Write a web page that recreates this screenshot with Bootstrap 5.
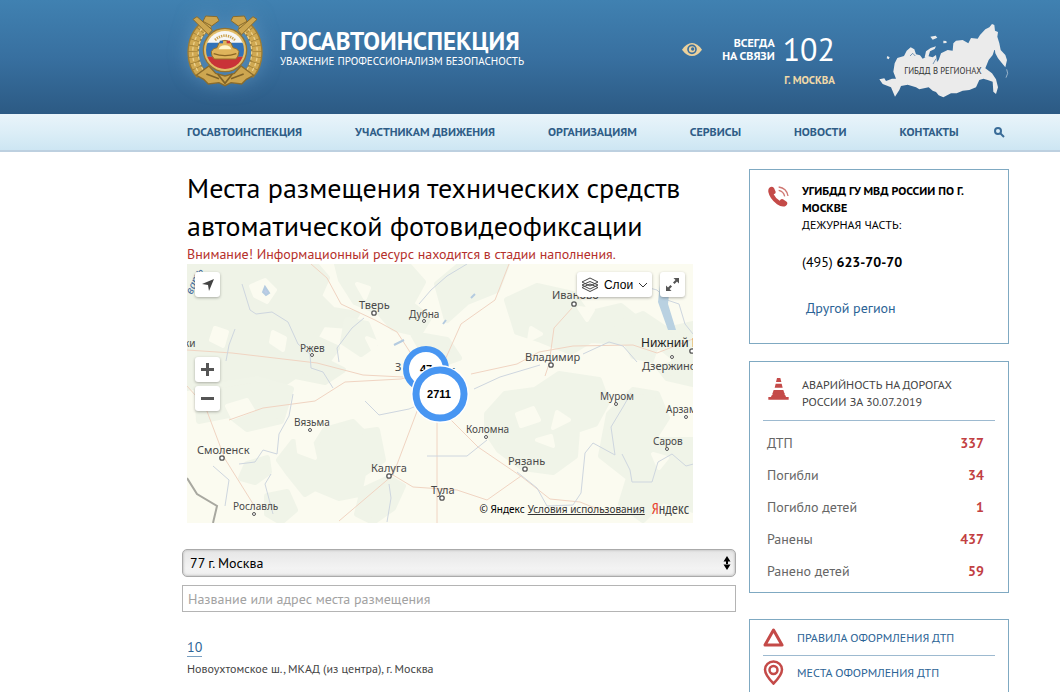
<!doctype html>
<html lang="ru">
<head>
<meta charset="utf-8">
<meta name="viewport" content="width=device-width, initial-scale=1">
<title>Госавтоинспекция</title>
<link rel="stylesheet" href="https://cdn.jsdelivr.net/npm/bootstrap@5.3.0/dist/css/bootstrap.min.css">
<style>
body{font-family:"PT Sans","Noto Sans",sans-serif;font-size:14px;line-height:18px;color:#000;background:#fff}
a{text-decoration:none;color:#2c6496}
.wrap{padding-left:187px;padding-right:51px}
.site-head{background:linear-gradient(#4081b1,#3870a0 50%,#2c5a84);min-height:114px;color:#fff}
.brand-box{padding-top:12px;gap:17px}
.brand-box svg{filter:drop-shadow(0 0 9px rgba(111,163,203,.5))}
.brand-name{font-size:25px;line-height:28px;font-weight:700;padding-top:15px}
.brand-sub{font-size:11px;line-height:12px}
.contact-box{padding-top:32px;margin-right:41px}
.eye-link{margin-right:20px;line-height:13px}
.always{font-size:12px;line-height:13px;font-weight:700}
.num102{font-size:32px;line-height:34px}
.city{font-size:11px;line-height:14px;font-weight:700;color:#f0d9a8}
.city:hover{color:#fff}
.regions{padding-top:20px}
.top-nav{background:linear-gradient(#e9f4fa,#dceef7 50%,#cde6f3);border-bottom:2px solid #bdd0e0;min-height:38px;font-size:12px;font-weight:700}
.top-nav ul{gap:53px}
.top-nav a{color:#2f5d87}
.icon-btn{background:none;border:0;padding:0;line-height:0}
.page-body{gap:13px;padding-top:17px}
h1{font-size:28px;line-height:38px;font-weight:400;margin:0}
.warn-text{color:#b5302c;line-height:19px}
.map-box{position:relative;max-width:506px;height:259px;overflow:hidden;background:#fbfbf0}
.map-box>svg{width:100%;height:100%;display:block}
.map-ctl{position:absolute;display:flex}
.zoom-ctl{bottom:112px}
.map-btn{background:#fff;border:0;border-radius:3px;box-shadow:0 1px 3px rgba(0,0,0,.3);width:25px;height:25px;padding:0;display:flex;align-items:center;justify-content:center}
.map-btn.layers{width:75px;gap:5px;font:12px "Liberation Sans",sans-serif;color:#000}
.map-copy{position:absolute;right:4px;bottom:5px;gap:3px;font-family:"Noto Sans",sans-serif;font-size:10px;line-height:18px}
.map-copy a{color:#333;text-decoration:underline}
.map-copy .ya-logo{font-family:"PT Sans Narrow","PT Sans","Noto Sans",sans-serif;font-size:15px;color:#444;text-decoration:none}
.ya-logo span{color:#e8402c}
.filters{margin:26px 0 0 -5px}
.filters .form-select{height:28px;padding:0 7px;border:1px solid #aaa;box-shadow:inset 0 0 2px 1px #ccc;border-radius:5px;font-size:14px;line-height:24px;color:#000;background:
url("data:image/svg+xml,%3Csvg xmlns='http://www.w3.org/2000/svg' viewBox='0 0 8 14'%3E%3Cpath d='M4 0l3.500 5.500h-7zM4 14l3.500-5.500h-7zM3 5h2v4H3z'/%3E%3C/svg%3E") right 4px center/8px 14px no-repeat,linear-gradient(#e6e6e6,#f3f3f3 70%,#eee)}
.filters .form-control{height:27px;padding:0 5px;border:1px solid #b4b4b4;border-radius:0;font-size:14px;line-height:20px}
.filters .form-control::placeholder{color:#a2a2a2}
.place{padding-top:26px}
.place a{border-bottom:1px solid #7aa0c2}
.place p{font-size:12px;color:#444;margin:4px 0 0}
aside{width:260px;flex:none;display:flex;flex-direction:column}
.side-box{border:1px solid #7fa9c2;padding:12px 13px}
.side-row{display:flex;gap:13px;padding-left:5px}
.side-row svg{flex:none}
.caps{font-size:12px;line-height:17px}
.duty{min-height:175px;margin-bottom:17px}
.duty-phone{padding:20px 0 28px}
.accidents{padding-bottom:5px;margin-bottom:26px}
.accidents .caps{color:#444;padding:2px 0 10px}
.accidents .thin-line{padding-top:6px}
.box-links a{gap:13px}
.stats{width:100%;margin:0}
.stats th,.stats td{font-size:14px;line-height:20px;padding:6px 11px 6px 4px}
.stats th{font-weight:400;color:#666}
.stats td{font-weight:700;text-align:right;color:#c23f43}
.thin-line{border-top:1px solid #9dbad0}
</style>
</head>
<body>
<header class="site-head wrap d-flex justify-content-between">
  <a href="#" class="brand-box d-flex text-white">
    <svg width="76" height="76" viewBox="0 0 228 228">
      <g fill="none" stroke="#9c7c35" stroke-width="34"><path d="M66 34C6 70 8 150 42 186M162 34C222 70 220 150 186 186"/></g>
      <g fill="none" stroke="#cfa851" stroke-width="26" stroke-dasharray="15 2"><path d="M66 34C6 70 8 150 42 186M162 34C222 70 220 150 186 186"/></g>
      <g fill="none" stroke="#ecd08a" stroke-width="4" stroke-dasharray="10 6"><path d="M58 38C8 76 8 146 36 182M170 38C220 76 220 146 192 182M68 48C26 80 26 140 50 176M160 48C202 80 202 140 178 176"/></g>
      <path d="M18 22l12-8 46 40-12 14zM210 22l-12-8-46 40 12 14zM56 12l34 2 6 12-22 16-26-14zM172 12l-34 2-6 12 22 16 26-14z" fill="#cda650" stroke="#8b6c2c" stroke-width="3"/>
      <path d="M28 190l38-28 20 22 28 8 28-8 20-22 38 28-22 12-14 14-32-4-18 9-18-9-32 4-14-14z" fill="#cda650" stroke="#8b6c2c" stroke-width="4"/>
      <path d="M58 186l38 14M170 186l-38 14M92 186l22 28 22-28" fill="none" stroke="#806328" stroke-width="5"/>
      <circle cx="114" cy="114" r="67" fill="#94732f"/><circle cx="114" cy="114" r="63" fill="#e2bd68"/>
      <clipPath id="em"><circle cx="114" cy="114" r="57"/></clipPath>
      <g clip-path="url(#em)"><path fill="#f7f7f5" d="M50 50h130v46H50z"/><path fill="#3272b8" d="M50 92h130v42H50z"/><path fill="#c93338" d="M50 134h130v40H50z"/></g>
      <path d="M84 84Q114 58 144 84" fill="none" stroke="#caa24c" stroke-width="8" stroke-dasharray="4 3"/>
      <path d="M96 93q18-16 36 0l6 14q14 2 18 12-2 15-9 22H82q-10-10-9-22 4-11 17-12z" fill="#dfb45b" stroke="#94712b" stroke-width="3"/>
      <path d="M99 104q15-8 30 0l4 8H95z" fill="#fff4ca"/><path d="M80 125q34 12 68 0" fill="none" stroke="#8a6524" stroke-width="4"/>
      <path fill="#306ab0" d="M98 86h10v8H98z"/><path fill="#cc3438" d="M119 86h10v8h-10z"/>
    </svg>
    <div><div class="brand-name">ГОСАВТОИНСПЕКЦИЯ</div><div class="brand-sub">УВАЖЕНИЕ ПРОФЕССИОНАЛИЗМ БЕЗОПАСНОСТЬ</div></div>
  </a>
  <div class="d-flex">
    <div class="contact-box">
      <div class="d-flex align-items-center">
        <a href="#" aria-label="Версия для слабовидящих" class="eye-link"><svg width="20" height="13" viewBox="0 0 60 39"><path d="M0 20Q14 0 30 0t30 20Q46 39 30 39T0 20z" fill="#ecd19c"/><circle cx="30" cy="19" r="12" fill="none" stroke="#3a6f9e" stroke-width="5"/><circle cx="32" cy="18" r="5" fill="#3a6f9e"/></svg></a>
        <div class="always text-end me-2">ВСЕГДА<br>НА СВЯЗИ</div><div class="num102">102</div>
      </div>
      <div class="text-end pt-1"><a href="#" class="city">Г. МОСКВА</a></div>
    </div>
    <a href="#" class="regions"><svg width="133" height="80" viewBox="620 60 399 240">
      <g fill="#ebebeb"><path d="M630 238L645 235 650 243 668 236 680 236 672 215 676 190 684 174 704 168 712 152 724 142 735 148 740 163 752 166 760 176 775 168 790 172 800 165 803 186 808 180 815 160 835 150 850 152 852 130 860 122 880 120 897 130 905 114 925 116 932 105 948 88 960 82 968 72 975 75 977 92 986 96 984 110 990 130 994 150 975 150 970 165 958 180 948 205 968 220 980 238 986 262 980 282 972 275 970 245 955 240 942 236 930 240 920 262 900 270 880 272 862 280 845 280 822 292 808 286 800 276 790 272 778 262 750 268 740 262 715 254 695 258 690 270 677 290 665 262 640 252Z"/>
      <path d="M976 145L994 150 1008 165 1013 180 1008 202 998 190 986 175 978 160ZM654 168l7 4-3 6-6-3zM783 110l16-3 5 6-14 6zM822 122l9 1 1 6-10 1zM766 172l4-18 14-10 16-5-4 8-14 7-6 20z"/></g>
      <path fill="none" stroke="#cad8e4" stroke-width="2" d="M1012 208l3 12-5 13"/><path fill="none" stroke="#3a6b98" stroke-width="2" d="M722 168l8-8 8 8M791 192l9-16"/>
      <text x="705" y="222" font-size="26" fill="#333">ГИБДД В РЕГИОНАХ</text></svg></a>
  </div>
</header>
<nav class="top-nav wrap d-flex align-items-center">
  <ul class="list-unstyled d-flex m-0 text-nowrap">
    <li><a href="#">ГОСАВТОИНСПЕКЦИЯ</a></li><li><a href="#">УЧАСТНИКАМ ДВИЖЕНИЯ</a></li><li><a href="#">ОРГАНИЗАЦИЯМ</a></li><li><a href="#">СЕРВИСЫ</a></li><li><a href="#">НОВОСТИ</a></li><li><a href="#">КОНТАКТЫ</a></li>
  </ul>
  <button class="icon-btn ms-auto" aria-label="Поиск"><svg class="me-1" width="11" height="11" viewBox="0 0 11 11" fill="none" stroke="#3a6c98" stroke-width="2"><circle cx="4" cy="4" r="3"/><path d="M6.500 6.500L10 10"/></svg></button>
</nav>
<div class="page-body wrap d-flex align-items-start">
  <main class="flex-grow-1">
    <h1>Места размещения технических средств автоматической фотовидеофиксации</h1>
    <div class="warn-text">Внимание! Информационный ресурс находится в стадии наполнения.</div>
    <div class="map-box">
      <svg viewBox="0 0 506 259" preserveAspectRatio="xMidYMid slice" font-family="Noto Sans, sans-serif">
        <g stroke-linejoin="round" stroke-width="6"><path fill="#eff3e7" stroke="#eff3e7" d="M0 0h128l12 14-8 18 14 14 24 4-8 12-26-2-8 14 22 10-10 14 16 8-18 12-30-6-12 8-28 2-10 12-24-4-10-10-24 4z"/>
        <path fill="#f0f4e8" stroke="#f0f4e8" d="M10 125l60-10 34 10-10 32-34 8-18-14-30 6zM92 196l14-18 22 4 10-16 28-8 10 10 14-2 6 30-20 14-4 20-20 4-24-10-10 6-16-20zM60 200l20-6 2 14-14 10-14-4zM80 232l20-4 8 18-14 12-14-8zM150 0h70l16 18-12 22 18 14-10 16-26-6-14-16-24-10-14-22zM160 56l20 4 8 20-14 10-18-12zM320 36l30-14 36 8 14 20 34-8 20 16-16 20-34-2-20 12-30-12-24-8zM300 150l18-20 30-4 24-16 40 6 8 22-12 22-18 6-2 26-22 16-30-4-24-18-12-18zM422 150l24-24 24 4 10 24-14 22 40 0v70l-30-10-20 20-22-16 8-26-28-22zM430 60l26-10 24 16 26-6v60l-26-6-14-18-20-4zM250 20l24-20h46l-10 26-30 12-20 18zM176 226l26-12 14 8-10 22-20 14-16-8zM226 70l34 6 12 18-22 8-14-14z"/></g>
        <path fill="#fbfbf0" stroke="#fbfbf0" stroke-width="4" stroke-linejoin="round" d="M64 22l14-6 10 10-8 12-12-6zM28 64l12 4-4 14-12-6zM86 68l12 6-2 12-12-8zM110 172l14 4 4 18-16-6zM344 64l10 6-12 6zM472 88l10 8-14 4zM370 148l12 8-16 8zM330 150l16-6 6 12-18 6zM40 142l20-6 6 10-20 8zM180 74l10 4-4 8zM466 190l14 4-8 10zM170 20l12 4-4 10zM392 44l14 2-6 10zM350 176l14-4 2 10z"/>
        <g fill="none" stroke="#f0d4c2" stroke-width="1" stroke-linejoin="round"><path d="M0 86l45 3 85 10 46 12 40 2M124 0l16 14 14 26 34 16 22 12 22 34M42 156l34-12 52-7 30-19 56-3 26-7M0 122l18 20 20 53 30 48M253 145l38 38 44 30 28 22 30 3 30 12M250 156v103M232 142l-26 69 20 12 44 3 30 10 34-24M206 211l-54 46M284 110l46-10 22-12 34-6 60-1 24 8 36-14M322 0l-14 36-34 24-16 36M385 44l-18 20-5 36-4 12"/></g>
        <g fill="none" stroke="#ced6df" stroke-width="1" stroke-linejoin="round"><path d="M55 20l8 26 6 4 16-2 16 10 10 22 12 10 1 14 12 4 10 16M152 98l-2-14 15-20 12-10M106 130l-4 22-10 18-2 20-14-4-8 12-16 2M48 65l-6 16-3 16M84 210l-6 10 8 30M26 202l16 14-4 26M232 40l12-14 16-14 20-12M178 137l14 14 30-6 24-10M202 220l2 14-4 24M240 192l40 0 20-16M330 208l20 16 10 18 26-1 8-12 4-40 8-10 22 12-4-28 12-20 8-14M435 190l8 16 2 12 20 0 6-20 14-8 14 12 15-4 7 10v40M506 70l-8-10-6-20-12-4-10-10-30-8-26 0-8-4"/><path d="M396 90l26-12 14 4 14 16M287 125l26-12 40-12"/></g>
        <path d="M474 12l-3 26 10 28h8l-8-26 3-28z" fill="#b9d1e1"/><path d="M76 28l2-5 4 6-3 2zM207 81l10-5M256 60l3-4M284 34l4-4" fill="#bdcce7" stroke="#b4cbe0" stroke-width="2"/>
        <path d="M0 214l10 16 20 12-4 17" fill="none" stroke="#a8a8a0" stroke-width="2"/>
        <text transform="translate(5 31)rotate(-65)" fill="#446b9f" font-size="11" font-style="italic">вать</text>
        <g fill="#494949" font-size="11">
          <text x="172" y="45">Тверь</text><text x="222" y="54" font-size="10">Дубна</text><text x="113" y="88" font-size="10">Ржев</text><text x="-3" y="83" font-size="10">ки</text><text x="208" y="107">З</text>
          <text x="365" y="35">Иваново</text><text x="338" y="97">Владимир</text><text x="454" y="83" fill="#222" font-size="12">Нижний Новгород</text><text x="455" y="106">Дзержинск</text><text x="413" y="136" font-size="10">Муром</text><text x="479" y="149" font-size="10">Арзамас</text><text x="466" y="181" font-size="10">Саров</text>
          <text x="107" y="162" font-size="10">Вязьма</text><text x="10" y="190">Смоленск</text><text x="46" y="246" font-size="10">Рославль</text><text x="184" y="208">Калуга</text><text x="279" y="169" font-size="10">Коломна</text><text x="321" y="201">Рязань</text><text x="244" y="230">Тула</text>
        </g>
        <g fill="#fff" stroke="#555"><g stroke-width="1.300"><circle cx="187" cy="49" r="2.200"/><circle cx="387" cy="40" r="2.200"/><circle cx="364" cy="101" r="2.200"/><circle cx="35" cy="194" r="2.200"/><circle cx="202" cy="212" r="2.200"/><circle cx="338" cy="205" r="2.200"/><circle cx="255" cy="234" r="2.200"/><circle cx="505" cy="87" r="2.200"/></g><circle cx="237" cy="57" r="1.500"/><circle cx="125" cy="91" r="1.500"/><circle cx="485" cy="93" r="1.500"/><circle cx="429" cy="140" r="1.500"/><circle cx="499" cy="153" r="1.500"/><circle cx="480" cy="185" r="1.500"/><circle cx="123" cy="166" r="1.500"/><circle cx="67" cy="250" r="1.500"/><circle cx="299" cy="173" r="1.500"/></g>
        <g font-family="Liberation Sans, sans-serif" font-size="11" font-weight="700" text-anchor="middle">
          <circle cx="239" cy="105" r="20" fill="#fff" stroke="#4896f2" stroke-width="6"/><text x="239" y="109">47</text><text x="266" y="107" font-weight="400">-</text>
          <circle cx="253" cy="130" r="29" fill="#fff"/><circle cx="253" cy="130" r="24" fill="#fff" stroke="#4896f2" stroke-width="7"/><text x="252" y="134">2711</text>
        </g>
      </svg>
      <div class="map-ctl top-0 start-0 m-2"><button class="map-btn" aria-label="Моё местоположение"><svg width="14" height="14" viewBox="0 0 14 14"><path fill="#444" d="M13 1L8 13 7 7 1 6z"/></svg></button></div>
      <div class="map-ctl zoom-ctl flex-column start-0 ms-2 gap-1"><button class="map-btn" aria-label="Приблизить"><svg width="13" height="13" viewBox="0 0 13 13"><path fill="#555" d="M5 0h3v5h5v3H8v5H5V8H0V5h5z"/></svg></button><button class="map-btn" aria-label="Отдалить"><svg width="13" height="3"><path fill="#555" d="M0 0h13v3H0z"/></svg></button></div>
      <div class="map-ctl top-0 end-0 m-2 gap-2"><button class="map-btn layers"><svg width="18" height="15" viewBox="0 0 18 15" fill="#fff" stroke="#444"><path d="M1 10.500l8-3.500 8 3.500-8 4zM1 8l8-3.500L17 8l-8 4zM1 5l8-4 8 4-8 4z"/></svg>Слои<svg width="10" height="6" viewBox="0 0 10 6" fill="none" stroke="#333"><path d="M1 1l4 4 4-4"/></svg></button><button class="map-btn" aria-label="На весь экран"><svg width="13" height="13" viewBox="0 0 13 13"><path fill="#555" d="M7.500 0H13v5.500l-2-2-2.500 2.500-1.500-1.500 2.500-2.500zM5.500 13H0V7.500l2 2L4.500 7 6 8.500 3.500 11z"/></svg></button></div>
      <div class="map-copy d-flex"><span>© Яндекс</span><a href="#">Условия использования</a><a href="#" class="ya-logo ms-1"><span>Я</span>ндекс</a></div>
    </div>
    <form class="filters d-flex flex-column gap-2">
      <select class="form-select" aria-label="Регион"><option>77 г. Москва</option></select>
      <input class="form-control" type="text" aria-label="Место размещения" placeholder="Название или адрес места размещения">
    </form>
    <div class="place"><a href="#">10</a><p>Новоухтомское ш., МКАД (из центра), г. Москва</p></div>
  </main>
  <aside>
    <section class="side-box duty">
      <div class="side-row"><svg class="mt-1" width="21" height="21" viewBox="0 0 63 63"><path fill="#c44a48" d="M4 5Q12-1 18 6l5 11q1 6-6 8 6 13 18 19 4-7 10-4l11 7q5 6-2 12-10 7-27-4Q5 38 1 18 0 9 4 5z"/><path d="M32 3Q56 6 60 30M32 13Q47 16 50 31" fill="none" stroke="#cf7772" stroke-width="4"/></svg>
        <div><div class="caps"><b>УГИБДД ГУ МВД РОССИИ ПО Г. МОСКВЕ</b><br>ДЕЖУРНАЯ ЧАСТЬ:</div><div class="duty-phone">(495) <b>623-70-70</b></div><a class="ms-1 d-block" href="#">Другой регион</a></div></div>
    </section>
    <section class="side-box accidents">
      <div class="side-row"><svg class="mt-1" width="21" height="22" viewBox="0 0 63 66"><path fill="#c44a48" d="M27 0h10l3 12H24zM23 17h18l3 12H20zM17 36h29l4 12H13zM11 52h41l2 5h8v8H1v-8h8z"/><path d="M15 46h34l3 10H11z" fill="#c44a48"/></svg>
        <div class="caps">АВАРИЙНОСТЬ НА ДОРОГАХ РОССИИ ЗА 30.07.2019</div></div>
      <div class="thin-line"><table class="stats"><tbody>
        <tr><th scope="row">ДТП</th><td>337</td></tr><tr><th scope="row">Погибли</th><td>34</td></tr><tr><th scope="row">Погибло детей</th><td>1</td></tr><tr><th scope="row">Ранены</th><td>437</td></tr><tr><th scope="row">Ранено детей</th><td>59</td></tr></tbody></table></div>
    </section>
    <section class="side-box box-links pt-0">
      <a href="#" class="caps d-flex align-items-center py-2"><svg width="21" height="19" viewBox="0 0 21 19"><path d="M10.500 2L19 17H2z" fill="none" stroke="#c44a48" stroke-width="3" stroke-linejoin="round"/></svg>ПРАВИЛА ОФОРМЛЕНИЯ ДТП</a>
      <a href="#" class="caps d-flex align-items-center py-1 thin-line"><svg width="21" height="25" viewBox="0 0 21 25" fill="none" stroke="#c44a48"><path stroke-width="2.500" d="M10.500 23.500Q2 15 2 9.500a8.500 8 0 0 1 17 0Q19 15 10.500 23.500z"/><circle cx="10.500" cy="10" r="4" stroke-width="2.500"/></svg>МЕСТА ОФОРМЛЕНИЯ ДТП</a>
    </section>
  </aside>
</div>
<script src="https://cdn.jsdelivr.net/npm/bootstrap@5.3.0/dist/js/bootstrap.bundle.min.js"></script>
</body>
</html>
